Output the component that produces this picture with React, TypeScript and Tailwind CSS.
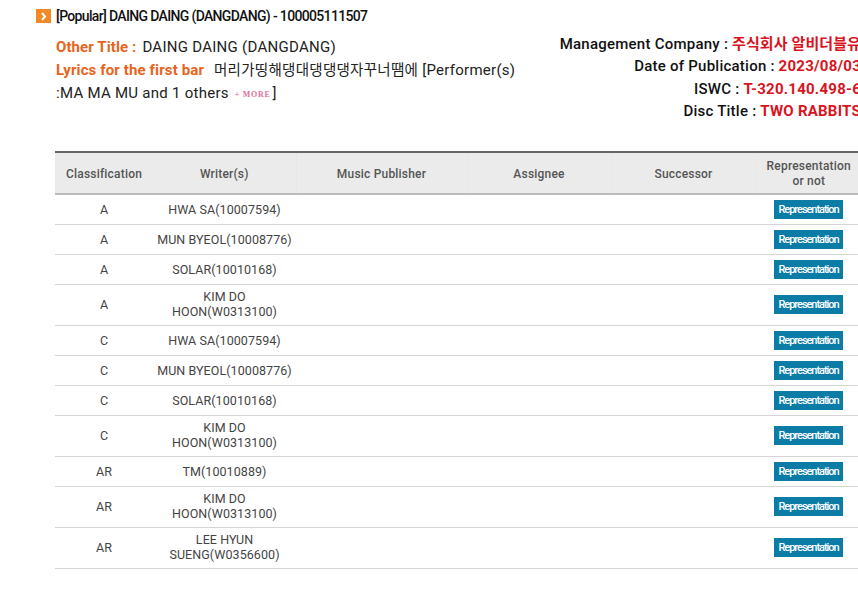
const rows = [
  { type: "A", writer: ["HWA SA(10007594)"] },
  { type: "A", writer: ["MUN BYEOL(10008776)"] },
  { type: "A", writer: ["SOLAR(10010168)"] },
  { type: "A", writer: ["KIM DO", "HOON(W0313100)"] },
  { type: "C", writer: ["HWA SA(10007594)"] },
  { type: "C", writer: ["MUN BYEOL(10008776)"] },
  { type: "C", writer: ["SOLAR(10010168)"] },
  { type: "C", writer: ["KIM DO", "HOON(W0313100)"] },
  { type: "AR", writer: ["TM(10010889)"] },
  { type: "AR", writer: ["KIM DO", "HOON(W0313100)"] },
  { type: "AR", writer: ["LEE HYUN", "SUENG(W0356600)"] },
];

const headers = ["Classification", "Writer(s)", "Music Publisher", "Assignee", "Successor"];

export default function App() {
  return (
    <div className="h-[603px] w-[858px] overflow-hidden bg-white font-['Roboto','Noto_Sans_CJK_KR',sans-serif] text-[#333]">
      <div className="w-[861px] pl-9 pt-[9px]">
        <h2 className="flex h-[14px] items-center gap-[5px] text-[14px] font-medium tracking-[-0.66px] text-[#111]">
          <span className="flex h-[14px] w-[15px] items-center justify-center bg-[#f08a24]">
            <svg width="8" height="9" viewBox="0 0 8 9" fill="none" stroke="#fff" strokeWidth="2">
              <path d="M2 1l3 3.5L2 8" />
            </svg>
          </span>
          [Popular] DAING DAING (DANGDANG) - 100005111507
        </h2>

        <div className="ml-5 flex justify-between">
          <div className="mt-[13px] w-[470px] text-[15px] leading-[22.5px] tracking-[0.27px] text-[#222]">
            <p>
              <b className="mr-[2px] font-bold tracking-[0.1px] text-[#e8641b]">Other Title :</b> DAING DAING (DANGDANG)
            </p>
            <p>
              <b className="mr-[10px] font-bold tracking-[0.12px] text-[#e8641b]">Lyrics for the first bar</b>
              <span className="text-[14.5px]">머리가띵해댕대댕댕댕자꾸너땜에</span> [Performer(s)
              <br />
              :MA MA MU and 1 others{" "}
              <span className="mx-[2px] align-[1px] font-['Liberation_Serif',serif] text-[8px] font-bold uppercase tracking-[0.7px] text-[#e0709a]">
                + more
              </span>
              ]
            </p>
          </div>
          <div className="mt-[10px] whitespace-nowrap text-right text-[15px] font-medium leading-[22.3px] tracking-[0.24px] text-[#111]">
            <p>
              Management Company : <span className="font-bold tracking-[0.1px] text-[#d9141e]">주식회사 알비더블유</span>
            </p>
            <p>
              Date of Publication : <span className="font-bold text-[#d9141e]">2023/08/03</span>
            </p>
            <p>
              ISWC : <span className="font-bold text-[#d9141e]">T-320.140.498-6</span>
            </p>
            <p>
              Disc Title : <span className="font-bold text-[#d9141e]">TWO RABBITS</span>
            </p>
          </div>
        </div>
      </div>

      <table className="ml-[55px] mt-[29px] w-[806px] table-fixed border-collapse text-center text-[12.5px] tracking-[0.07px] text-[#444]">
        <colgroup>
          <col className="w-[98px]" />
          <col className="w-[143px]" />
          <col className="w-[171px]" />
          <col className="w-[144px]" />
          <col className="w-[145px]" />
          <col className="w-[105px]" />
        </colgroup>
        <thead>
          <tr className="h-[42px] border-b-2 border-t-2 border-b-[#bbb] border-t-[#666] bg-[#ebebeb] text-[12px] leading-[15px] tracking-[0.2px] text-[#555]">
            {headers.map((h, i) => (
              <th key={h} className={`pt-[2px] font-medium ${i > 1 ? "border-l border-[#e7e7e7]" : ""}`}>
                {h}
              </th>
            ))}
            <th className="border-l border-[#e9e9e9] pt-[1px] font-medium">
              Representation
              <br />
              or not
            </th>
          </tr>
        </thead>
        <tbody>
          {rows.map((row, i) => (
            <tr key={i} className={`border-b border-[#d5d5d5] ${row.writer.length > 1 ? "h-[41px]" : "h-[30px]"} leading-[15px]`}>
              <td className={row.writer.length > 1 ? "pb-[1px]" : "pt-[1px]"}>{row.type}</td>
              <td className={row.writer.length > 1 ? "pb-[1px]" : "pt-[1px]"}>
                {row.writer.map((line) => (
                  <div key={line}>{line}</div>
                ))}
              </td>
              <td />
              <td />
              <td />
              <td>
                <span className="inline-flex h-[19px] w-[69px] items-center justify-center bg-[#0a7ca6] align-middle text-[11px] font-medium tracking-[-1.05px] text-white">
                  Representation
                </span>
              </td>
            </tr>
          ))}
        </tbody>
      </table>
    </div>
  );
}
